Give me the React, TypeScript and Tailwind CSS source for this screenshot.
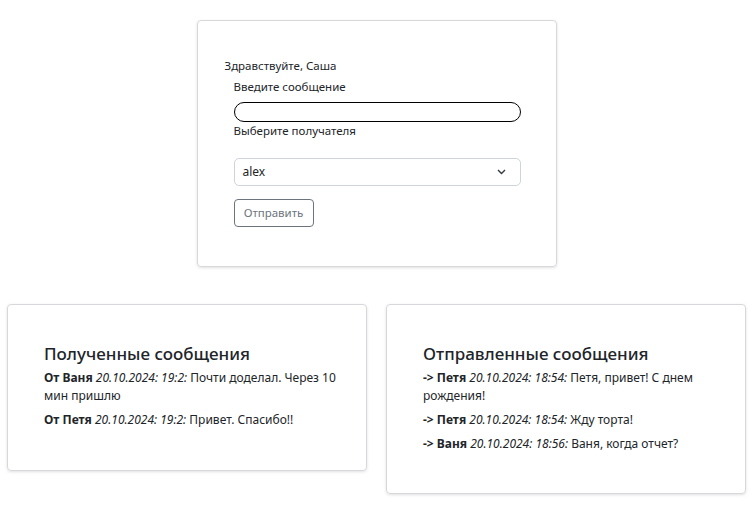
import React from "react";

const font = { fontFamily: '"Noto Sans", "Open Sans", sans-serif' };

function Msg({ who, date, text }: { who: string; date: string; text: string }) {
  return (
    <p className="text-[12px] leading-[18px] text-[#212529]">
      <b className="font-bold">{who}</b> <i className="italic">{date}</i> {text}
    </p>
  );
}

export default function App() {
  return (
    <div className="min-h-[511px] w-[753px] bg-white pt-5" style={font}>
      <div className="mx-auto flex h-[247px] w-[360px] flex-col rounded-[4px] border border-[#d6d8db] pl-[27px] pr-[35px] pt-[36px] shadow-[0_1px_3px_rgba(0,0,0,0.12)]">
        <div className="text-[11.5px] leading-[18px] text-[#212529]">Здравствуйте, Саша</div>
        <div className="flex flex-col pl-[9px]">
          <label className="mt-[3px] text-[11.5px] leading-[18px] text-[#212529]">Введите сообщение</label>
          <input className="mt-[6px] h-[20px] w-full rounded-full border border-black px-2 text-[12px] outline-none" />
          <label className="text-[11.5px] leading-[18px] text-[#212529]">Выберите получателя</label>
          <div className="mt-[18px] flex h-[28px] w-full items-center justify-between rounded-[5px] border border-[#ced4da] pl-[8px] pr-[14px] text-[12px] text-[#212529]">
            <span>alex</span>
            <svg width="9" height="6" viewBox="0 0 9 6" fill="none">
              <path d="M1 1l3.5 3.5L8 1" stroke="#343a40" strokeWidth="1.4" />
            </svg>
          </div>
          <button className="mt-[13px] h-[28px] w-[80px] rounded-[4px] border border-[#6c757d] text-[11.5px] text-[#6c757d]">
            Отправить
          </button>
        </div>
      </div>
      <div className="mt-[37px] flex items-start justify-between px-[7px]">
        <div className="flex h-[167px] w-[360px] flex-col gap-[6px] rounded-[4px] border border-[#d6d8db] pl-[36px] pr-[28px] pt-[38px] shadow-[0_1px_3px_rgba(0,0,0,0.12)]">
          <h5 className="mb-[-2px] text-[17px] font-medium leading-[22px] text-[#212529]">Полученные сообщения</h5>
          <Msg who="От Ваня" date="20.10.2024: 19:2:" text="Почти доделал. Через 10 мин пришлю" />
          <Msg who="От Петя" date="20.10.2024: 19:2:" text="Привет. Спасибо!!" />
        </div>
        <div className="flex h-[190px] w-[360px] flex-col gap-[6px] rounded-[4px] border border-[#d6d8db] pl-[36px] pr-[28px] pt-[38px] shadow-[0_1px_3px_rgba(0,0,0,0.12)]">
          <h5 className="mb-[-2px] text-[17px] font-medium leading-[22px] text-[#212529]">Отправленные сообщения</h5>
          <Msg who="-> Петя" date="20.10.2024: 18:54:" text="Петя, привет! С днем рождения!" />
          <Msg who="-> Петя" date="20.10.2024: 18:54:" text="Жду торта!" />
          <Msg who="-> Ваня" date="20.10.2024: 18:56:" text="Ваня, когда отчет?" />
        </div>
      </div>
    </div>
  );
}
